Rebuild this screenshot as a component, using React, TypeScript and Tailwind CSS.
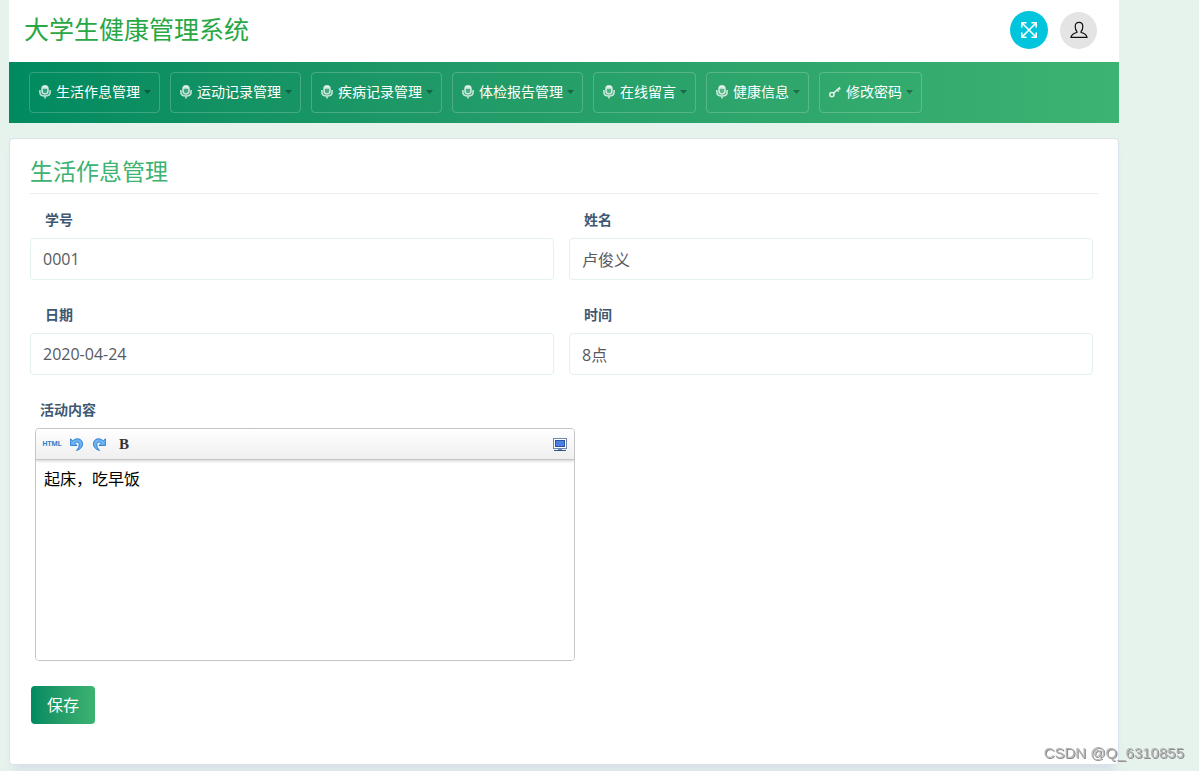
import React from 'react';

const menuItems = [
  { label: '生活作息管理', icon: 'mic' },
  { label: '运动记录管理', icon: 'mic' },
  { label: '疾病记录管理', icon: 'mic' },
  { label: '体检报告管理', icon: 'mic' },
  { label: '在线留言', icon: 'mic' },
  { label: '健康信息', icon: 'mic' },
  { label: '修改密码', icon: 'key' },
];

const fields = [
  { id: 'studentNo', label: '学号', value: '0001' },
  { id: 'name', label: '姓名', value: '卢俊义' },
  { id: 'date', label: '日期', value: '2020-04-24' },
  { id: 'time', label: '时间', value: '8点' },
];

const MicIcon: React.FC = () => (
  <svg viewBox="0 0 12 14" className="h-3.5 w-3 shrink-0" fill="none" stroke="#ffffff" strokeOpacity="0.75">
    <rect x="3" y="0.8" width="6" height="8.2" rx="3" strokeWidth="1.6" fill="#ffffff" fillOpacity="0.2" />
    <path d="M3.6 3h4.8M4.2 1.8h3.6" strokeWidth="1.4" />
    <path d="M0.9 5v2.300c0 2.200 2 3.700 5.1 3.700s5.1-1.500 5.1-3.700V5M6 11v2.600" strokeWidth="1.6" />
  </svg>
);

const KeyIcon: React.FC = () => (
  <svg viewBox="0 0 12 14" className="h-3.5 w-3 shrink-0" fill="none" stroke="#ffffff" strokeOpacity="0.85" strokeWidth="1.5">
    <circle cx="2.9" cy="9.6" r="2.1" />
    <path d="M4.5 8.1L11 2.4M8.2 4.9l1.6 1.7M10 3.2l1.3 1.4" />
  </svg>
);

const ExpandIcon: React.FC = () => (
  <svg viewBox="0 0 16 16" className="h-4 w-4" fill="none" stroke="#ffffff" strokeWidth="1.6">
    <path d="M1 1l14 14M15 1L1 15" />
    <path d="M0.8 5.5V0.8h4.7M10.5 0.8h4.7v4.7M15.2 10.5v4.7h-4.7M5.5 15.2H0.8v-4.7" />
  </svg>
);

const UserIcon: React.FC = () => (
  <svg viewBox="0 0 18 18" className="h-[18px] w-[18px]" fill="none" stroke="#111111" strokeWidth="1.2">
    <path d="M6.9 10.5C5.7 9.3 5.2 7.4 5.2 5.4 5.2 2.7 6.7 1.4 9 1.4s3.8 1.3 3.8 4c0 2-.5 3.9-1.7 5.1v1c3.2.8 5.4 1.7 5.9 4.9H1c.5-3.2 2.7-4.1 5.9-4.9z" />
  </svg>
);

const UndoIcon: React.FC = () => (
  <svg viewBox="0 0 13 13" className="h-[13px] w-[13px]">
    <path
      d="M0.6 0.8v6.700h6.400L4.900 5.300C6.500 3.600 9.200 3.800 9.200 6.600c0 2.200-1 3.900-2.700 5.900 3.900-1.200 6-3.400 6-6.600C12.500 0.400 6.200-0.700 2.700 2.900z"
      fill="#6db5f2"
      stroke="#2478d2"
      strokeWidth="0.9"
    />
  </svg>
);

const ScreenIcon: React.FC = () => (
  <svg viewBox="0 0 14 13" className="h-[13px] w-3.5">
    <rect x="0.5" y="0.5" width="13" height="10" fill="#ffffff" stroke="#7283ad" />
    <rect x="2.5" y="2.5" width="9" height="6" fill="#4d7fe0" stroke="#2d4fa5" />
    <path d="M5 11h4v1H5z" fill="#7283ad" />
    <path d="M1 12h12v1H1z" fill="#2d4f91" />
  </svg>
);

const Header: React.FC = () => (
  <header className="flex h-[62px] items-center justify-between bg-white pb-0.5 pl-[15px] pr-[22px]">
    <h1 className="pb-0.5 text-[25px] font-normal leading-8 text-[#28a745]">大学生健康管理系统</h1>
    <div className="flex items-center gap-3">
      <button type="button" aria-label="全屏" className="flex h-[38px] w-[38px] items-center justify-center rounded-full bg-[#00c5dc]">
        <ExpandIcon />
      </button>
      <button type="button" aria-label="用户" className="flex h-[37px] w-[37px] items-center justify-center rounded-full bg-[#e4e4e4]">
        <UserIcon />
      </button>
    </div>
  </header>
);

const Menu: React.FC = () => (
  <nav className="flex flex-wrap gap-2.5 bg-linear-to-r from-[#008a60] to-[#3cb371] px-5 py-2.5">
    {menuItems.map((item) => (
      <a
        key={item.label}
        href="#"
        className="flex h-[41px] items-center rounded border border-white/20 pb-0.5 pl-[9px] pr-2 text-sm text-white"
      >
        {item.icon === 'mic' ? <MicIcon /> : <KeyIcon />}
        <span className="ml-[5px] mr-1">{item.label}</span>
        <svg viewBox="0 0 7 4" className="h-1 w-[7px]">
          <path d="M0 0h7L3.5 4z" fill="#000000" fillOpacity="0.35" />
        </svg>
      </a>
    ))}
  </nav>
);

const Editor: React.FC = () => (
  <div className="ml-[5px] max-w-[540px] overflow-hidden rounded border border-[#c5c5c5]">
    <div className="relative flex h-[31px] items-center border-b border-[#c5c5c5] bg-linear-to-b from-white to-[#efefef] px-1 shadow-[0_1px_3px_rgba(0,0,0,0.2)]">
      <button type="button" className="w-6 text-center font-['Roboto'] text-[7px] font-bold text-[#2f7fc4]">
        HTML
      </button>
      <button type="button" aria-label="撤销" className="flex w-6 justify-center">
        <UndoIcon />
      </button>
      <button type="button" aria-label="重做" className="flex w-6 -scale-x-100 justify-center">
        <UndoIcon />
      </button>
      <button type="button" className="w-6 text-center font-['Liberation_Serif'] text-[15px] font-bold leading-5 text-[#333333]">
        B
      </button>
      <button type="button" aria-label="全屏编辑" className="ml-auto flex w-5 justify-center">
        <ScreenIcon />
      </button>
    </div>
    <textarea
      id="content"
      defaultValue="起床，吃早饭"
      className="block h-[200px] w-full resize-none bg-white px-2 py-[7px] text-base leading-6 text-black outline-none"
    />
  </div>
);

const Watermark: React.FC = () => (
  <div className="fixed bottom-2 right-[15px] font-['Liberation_Sans'] text-[15px] leading-5 text-[#b4b4b4] [text-shadow:1px_1px_0_#8c8c8c]">
    CSDN @Q_6310855
  </div>
);

const App: React.FC = () => {
  return (
    <div className="min-h-screen bg-[#e6f3ec] pl-[9px] pr-20 font-['Open_Sans','Noto_Sans_CJK_SC',sans-serif]" lang="zh-CN">
      <Header />
      <Menu />
      <main className="mt-[15px] rounded-sm border border-[#dae3ea] bg-white px-5 pb-10 pt-[15px] shadow-[0_10px_8px_-4px_rgba(212,220,234,0.8)]">
        <h2 className="border-b border-[#ebedf2] pb-1 text-[23px] font-normal leading-[35px] text-[#3cb371]">
          生活作息管理
        </h2>
        <form className="mt-4" onSubmit={(e) => e.preventDefault()}>
          <div className="mr-[5px] grid grid-cols-2 gap-x-[15px] gap-y-[25px]">
            {fields.map((field) => (
              <div key={field.id}>
                <label htmlFor={field.id} className="mb-2 block pl-[15px] text-sm font-semibold text-[#3f5872]">
                  {field.label}
                </label>
                <input
                  id={field.id}
                  type="text"
                  defaultValue={field.value}
                  className="h-[42px] w-full rounded border border-[#e2f1ec] bg-white px-3 text-base text-[#575962] outline-none"
                />
              </div>
            ))}
          </div>
          <label htmlFor="content" className="mb-2 mt-[25px] block pl-2.5 text-sm font-semibold text-[#3f5872]">
            活动内容
          </label>
          <Editor />
          <button
            type="submit"
            className="ml-px mt-[25px] h-[38px] rounded bg-linear-to-r from-[#008a60] to-[#3cb371] px-4 text-base text-white"
          >
            保存
          </button>
        </form>
      </main>
      <Watermark />
    </div>
  );
};

export default App;
